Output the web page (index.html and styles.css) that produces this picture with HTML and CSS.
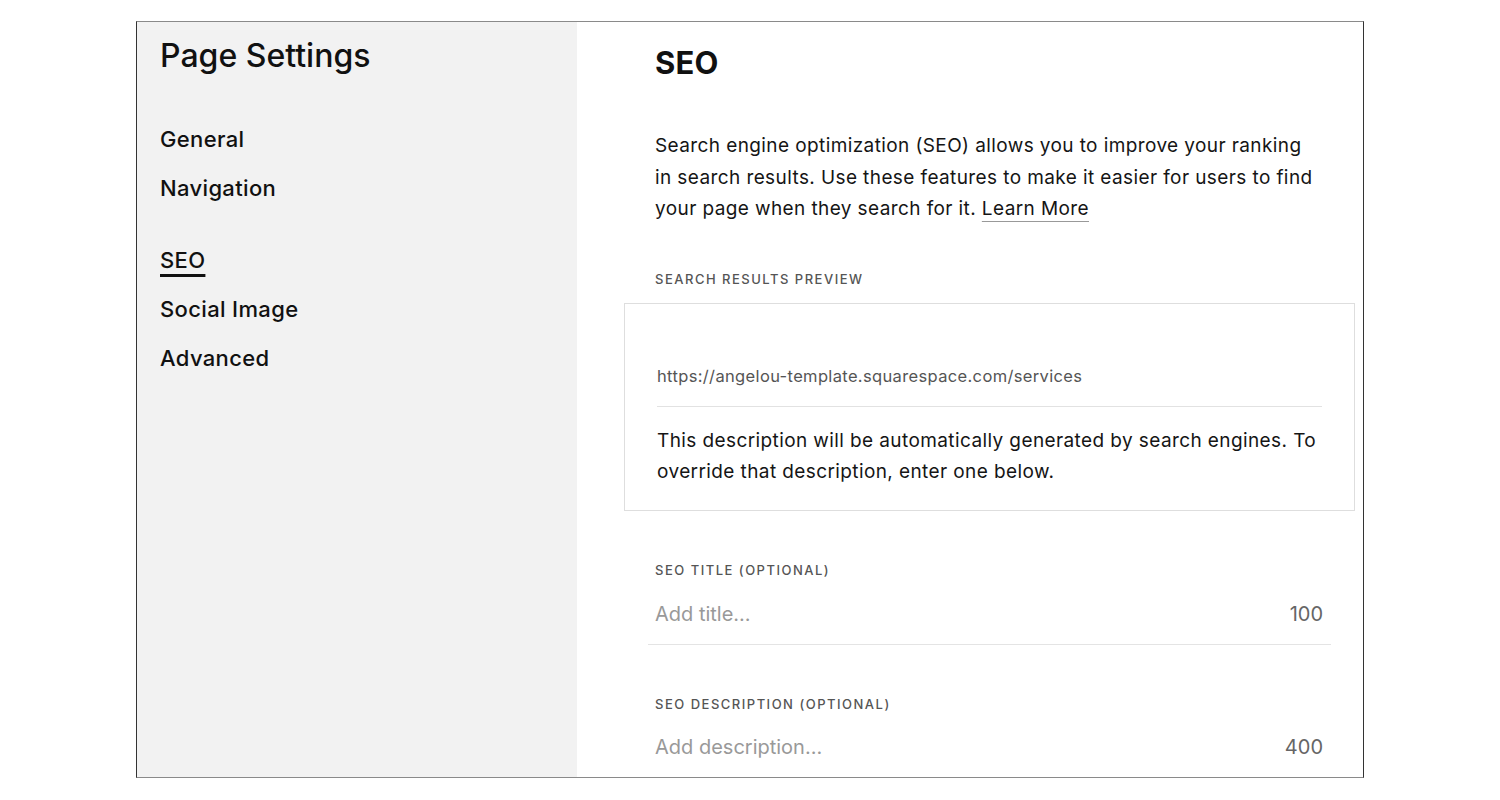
FILE: index.html
```html
<!DOCTYPE html>
<html lang="en">
<head>
<meta charset="utf-8">
<title>Page Settings</title>
<link rel="stylesheet" href="styles.css">
</head>
<body>
<div class="frame">
  <aside class="sidebar">
    <h1 class="side-title">Page Settings</h1>
    <nav class="nav">
      <div class="nav-group">
        <a class="nav-item">General</a>
        <a class="nav-item">Navigation</a>
      </div>
      <div class="nav-group">
        <a class="nav-item active">SEO</a>
        <a class="nav-item">Social Image</a>
        <a class="nav-item">Advanced</a>
      </div>
    </nav>
  </aside>
  <main class="content">
    <h2 class="heading">SEO</h2>
    <p class="intro">Search engine optimization (SEO) allows you to improve your ranking in search results. Use these features to make it easier for users to find your page when they search for it. <a class="link">Learn More</a></p>
    <div class="label">Search Results Preview</div>
    <div class="preview">
      <div class="preview-url">https://angelou-template.squarespace.com/services</div>
      <div class="preview-desc">This description will be automatically generated by search engines. To override that description, enter one below.</div>
    </div>
    <div class="field">
      <div class="label">SEO Title (Optional)</div>
      <div class="input-row">
        <span class="placeholder">Add title...</span>
        <span class="count">100</span>
      </div>
    </div>
    <div class="field field-last">
      <div class="label">SEO Description (Optional)</div>
      <div class="input-row">
        <span class="placeholder">Add description...</span>
        <span class="count">400</span>
      </div>
    </div>
  </main>
</div>
</body>
</html>
```
FILE: styles.css
```css
* { box-sizing: border-box; }
html, body { margin: 0; padding: 0; background: #fff; }
body {
  font-family: Inter, "Liberation Sans", sans-serif;
  color: #111;
  padding: 21px 136px 0 136px;
  height: 800px;
  overflow: hidden;
}
.frame {
  display: flex;
  width: 1228px;
  height: 757px;
  border-top: 1px solid #8a8a8a;
  border-bottom: 1px solid #8a8a8a;
  border-left: 1px solid #333;
  border-right: 1px solid #333;
  overflow: hidden;
}
.sidebar {
  width: 440px;
  flex: none;
  background: #f2f2f2;
  padding: 15px 0 0 23px;
}
.side-title {
  margin: 0;
  font-size: 32px;
  font-weight: 500;
  line-height: 38px;
  letter-spacing: 0;
}
.nav { margin-top: 51px; display: flex; flex-direction: column; gap: 45px; }
.nav-group { display: flex; flex-direction: column; }
.nav-item {
  font-size: 22px;
  font-weight: 500;
  line-height: 27px;
  margin-bottom: 22px;
  align-self: flex-start;
  letter-spacing: 0.35px;
}
.nav-group .nav-item:last-child { margin-bottom: 0; }
.nav-item.active {
  text-decoration: underline;
  text-decoration-thickness: 3px;
  text-underline-offset: 6px;
}
.content {
  flex: 1;
  padding: 23px 0 0 78px;
}
.content > * { width: 668px; }
.heading {
  margin: 0;
  font-size: 31px;
  font-weight: 700;
  line-height: 36px;
  letter-spacing: 0.2px;
}
.intro {
  margin: 49px 0 0 0;
  font-size: 19px;
  letter-spacing: 0.4px;
  line-height: 31.5px;
  color: #151515;
}
.link {
  text-decoration: underline;
  text-decoration-color: #999;
  text-underline-offset: 6px;
  text-decoration-thickness: 1px;
}
.label {
  font-size: 13px;
  font-weight: 500;
  letter-spacing: 1.5px;
  text-transform: uppercase;
  color: #555;
  line-height: 16px;
}
.content > .label { margin-top: 46px; }
.preview {
  width: 731px;
  margin: 16px 0 0 -31px;
  border: 1px solid #dedede;
  padding: 60px 32px 22px 32px;
}
.preview-url {
  font-size: 16.5px;
  letter-spacing: 0.35px;
  color: #555;
  line-height: 24px;
  padding-bottom: 18px;
  border-bottom: 1px solid #e2e2e2;
}
.preview-desc {
  margin-top: 18px;
  font-size: 19px;
  letter-spacing: 0.4px;
  line-height: 31.5px;
  color: #151515;
}
.field { margin-top: 51px; width: 683px; margin-left: -7px; }
.field .label { padding-left: 7px; }
.input-row {
  display: flex;
  justify-content: space-between;
  align-items: center;
  padding: 23px 8px 17px 7px;
  border-bottom: 1px solid #e4e4e4;
  font-size: 20px;
  line-height: 26px;
}
.field-last { margin-top: 51px; }
.field-last .input-row { border-bottom: none; padding-top: 22px; }
.placeholder { color: #999; }
.count { color: #666; }
```
